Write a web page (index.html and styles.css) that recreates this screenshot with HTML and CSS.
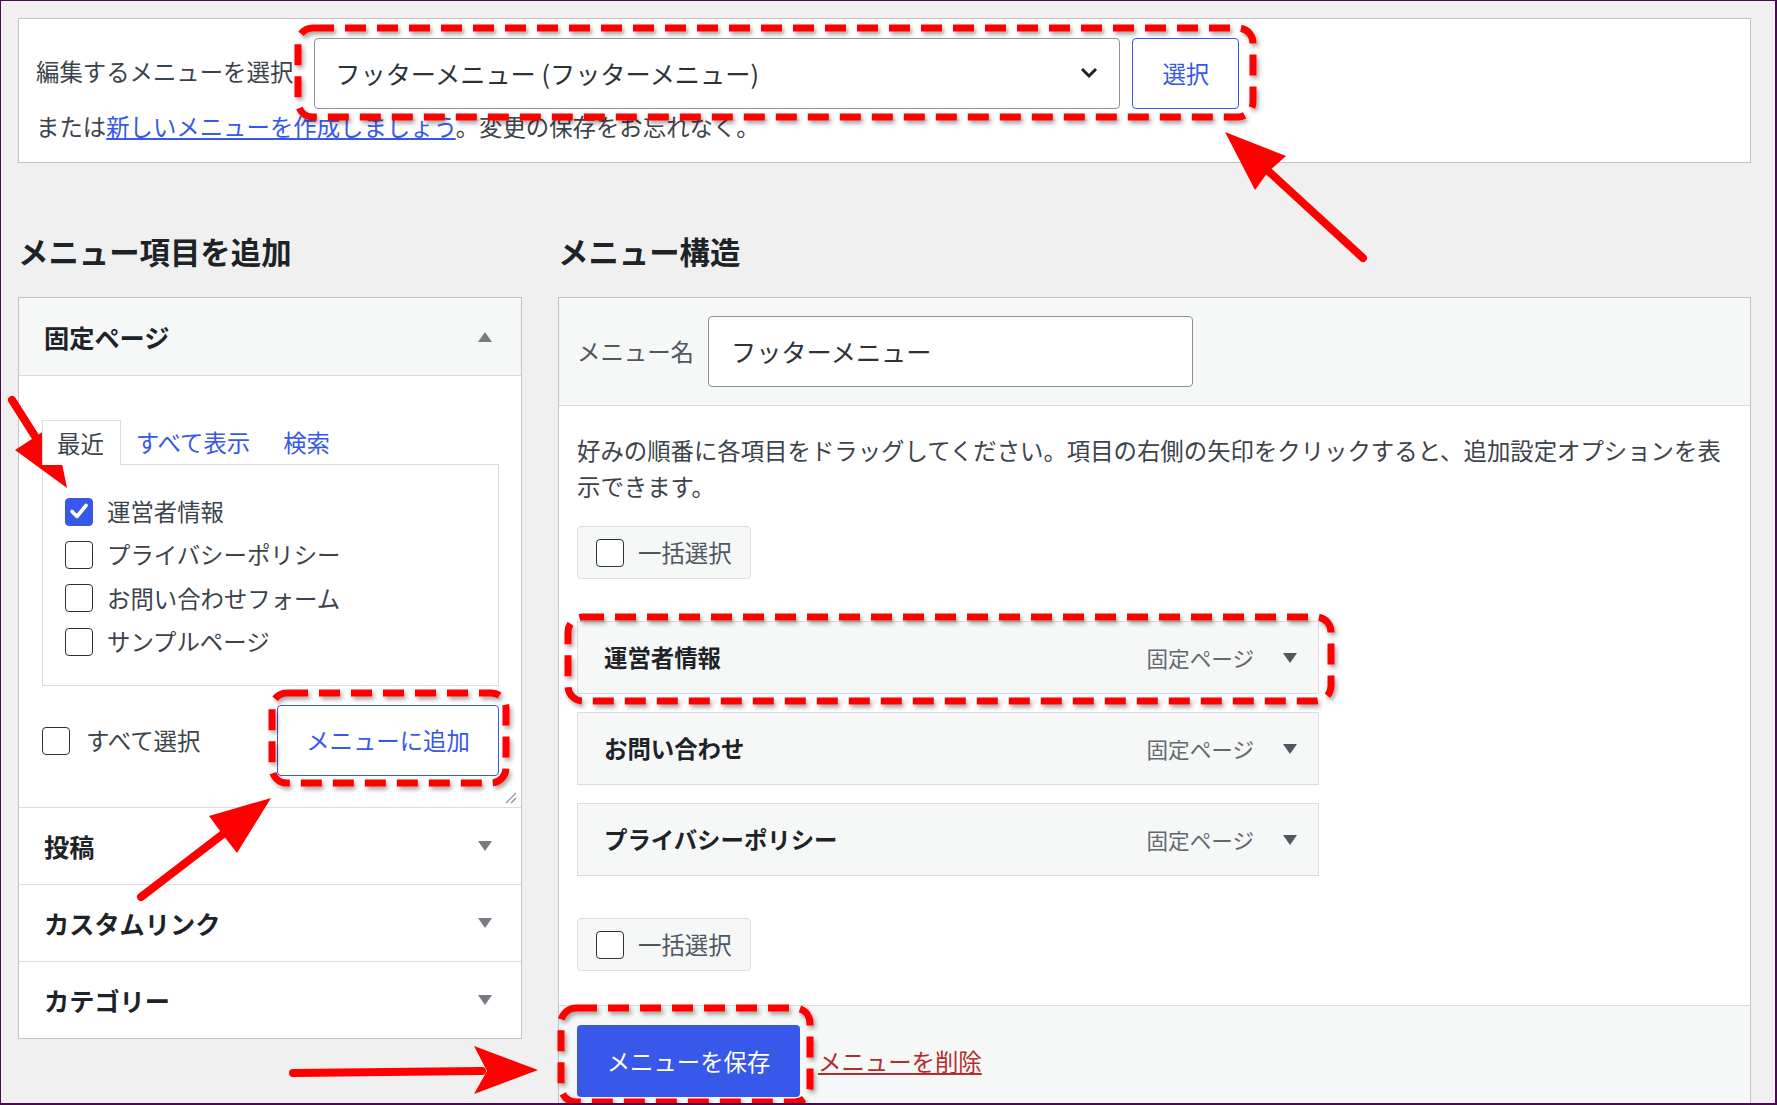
FILE: index.html
```html
<!DOCTYPE html>
<html lang="ja">
<head>
<meta charset="utf-8">
<title>メニュー</title>
<link rel="stylesheet" href="styles.css">
</head>
<body>
<div class="frame">
  <div class="page">
    <div class="manage-menus">
      <div class="select-row">
        <span class="select-label">編集するメニューを選択</span>
        <div class="select-box">
          <span>フッターメニュー (フッターメニュー)</span>
          <svg class="chevron" width="18" height="12" viewBox="0 0 18 12"><polyline points="2,2 9,9 16,2" fill="none" stroke="#1d2327" stroke-width="3"/></svg>
        </div>
        <button class="btn-outline select-btn">選択</button>
      </div>
      <p class="create-line">または<a class="link" href="#">新しいメニューを作成しましょう</a>。変更の保存をお忘れなく。</p>
    </div>

    <div class="columns">
      <div class="col-left">
        <h2 class="col-title">メニュー項目を追加</h2>
        <div class="accordion">
          <div class="acc-section open">
            <div class="acc-title">
              <h3>固定ページ</h3>
              <svg class="tri" width="16" height="12" viewBox="0 0 16 12"><polygon points="8,1 15,11 1,11" fill="#787c82"/></svg>
            </div>
            <div class="acc-content">
              <ul class="tabs">
                <li class="tab active">最近</li>
                <li class="tab"><a class="link plain" href="#">すべて表示</a></li>
                <li class="tab"><a class="link plain" href="#">検索</a></li>
              </ul>
              <div class="tab-panel">
                <div class="check-row"><span class="cb checked"><svg width="28" height="28" viewBox="0 0 28 28"><polyline points="7,14.5 12,19.5 21,8.5" fill="none" stroke="#fff" stroke-width="3.6" stroke-linecap="round" stroke-linejoin="round"/></svg></span>運営者情報</div>
                <div class="check-row"><span class="cb"></span>プライバシーポリシー</div>
                <div class="check-row"><span class="cb"></span>お問い合わせフォーム</div>
                <div class="check-row"><span class="cb"></span>サンプルページ</div>
              </div>
              <div class="add-row">
                <div class="check-row select-all"><span class="cb"></span>すべて選択</div>
                <button class="btn-outline add-btn">メニューに追加</button>
              </div>
              <svg class="resize-handle" width="12" height="12" viewBox="0 0 12 12"><line x1="1" y1="11" x2="11" y2="1" stroke="#8c8f94" stroke-width="1.2"/><line x1="6" y1="11" x2="11" y2="6" stroke="#8c8f94" stroke-width="1.2"/></svg>
            </div>
          </div>
          <div class="acc-section">
            <div class="acc-title">
              <h3>投稿</h3>
              <svg class="tri" width="16" height="12" viewBox="0 0 16 12"><polygon points="1,1 15,1 8,11" fill="#787c82"/></svg>
            </div>
          </div>
          <div class="acc-section">
            <div class="acc-title">
              <h3>カスタムリンク</h3>
              <svg class="tri" width="16" height="12" viewBox="0 0 16 12"><polygon points="1,1 15,1 8,11" fill="#787c82"/></svg>
            </div>
          </div>
          <div class="acc-section last">
            <div class="acc-title">
              <h3>カテゴリー</h3>
              <svg class="tri" width="16" height="12" viewBox="0 0 16 12"><polygon points="1,1 15,1 8,11" fill="#787c82"/></svg>
            </div>
          </div>
        </div>
      </div>

      <div class="col-right">
        <h2 class="col-title">メニュー構造</h2>
        <div class="menu-box">
          <div class="menu-header">
            <span class="name-label">メニュー名</span>
            <div class="name-input">フッターメニュー</div>
          </div>
          <div class="menu-body">
            <p class="instructions">好みの順番に各項目をドラッグしてください。項目の右側の矢印をクリックすると、追加設定オプションを表示できます。</p>
            <div class="bulk"><span class="cb"></span>一括選択</div>
            <ul class="menu-items">
              <li class="menu-item"><span class="item-title">運営者情報</span><span class="item-type">固定ページ</span><svg width="16" height="12" viewBox="0 0 16 12"><polygon points="1,1 15,1 8,11" fill="#50575e"/></svg></li>
              <li class="menu-item"><span class="item-title">お問い合わせ</span><span class="item-type">固定ページ</span><svg width="16" height="12" viewBox="0 0 16 12"><polygon points="1,1 15,1 8,11" fill="#50575e"/></svg></li>
              <li class="menu-item"><span class="item-title">プライバシーポリシー</span><span class="item-type">固定ページ</span><svg width="16" height="12" viewBox="0 0 16 12"><polygon points="1,1 15,1 8,11" fill="#50575e"/></svg></li>
            </ul>
            <div class="bulk"><span class="cb"></span>一括選択</div>
          </div>
          <div class="menu-footer">
            <button class="btn-primary">メニューを保存</button>
            <a class="delete-link" href="#">メニューを削除</a>
          </div>
        </div>
      </div>
    </div>
  </div>

  <svg class="annotations" width="1777" height="1105" viewBox="0 0 1777 1105">
    <defs>
      <filter id="sh" x="-5%" y="-20%" width="110%" height="140%">
        <feDropShadow dx="2" dy="3" stdDeviation="2" flood-color="#000" flood-opacity="0.35"/>
      </filter>
    </defs>
    <g fill="none" stroke="#ff0000" stroke-width="7" stroke-dasharray="21 11" filter="url(#sh)">
      <rect x="298" y="28" width="955" height="89" rx="15"/>
      <rect x="272" y="693" width="234" height="90" rx="15"/>
      <rect x="568" y="617" width="763" height="84" rx="15"/>
      <rect x="561" y="1008" width="249" height="94" rx="15"/>
    </g>
    <g stroke="#ff0000" stroke-width="8" stroke-linecap="round" fill="#ff0000">
      <line x1="1363" y1="258" x2="1265" y2="168"/>
      <polygon stroke="none" points="1225,132 1286,156 1268,172 1255,190"/>
      <line x1="12" y1="400" x2="38" y2="441"/>
      <polygon stroke="none" points="67,488 15,450 35,437 54,424"/>
      <line x1="141" y1="897" x2="227" y2="831"/>
      <polygon stroke="none" points="271,798 237,853 223,835 209,816"/>
      <line x1="293" y1="1073" x2="482" y2="1071"/>
      <polygon stroke="none" points="538,1070 474,1046 487,1071 474,1094"/>
    </g>
  </svg>
</div>
</body>
</html>
```
FILE: styles.css
```css
* { box-sizing: border-box; }

html, body {
  margin: 0;
  padding: 0;
  background: #f0f0f1;
}

body {
  font-family: "Noto Sans CJK JP", "Noto Sans", "Liberation Sans", sans-serif;
  font-size: 23.4px;
  color: #3c434a;
}

.frame {
  position: relative;
  width: 1777px;
  height: 1105px;
  border: 1px solid #4b0b4f;
  border-right-width: 2px;
  border-bottom-width: 2px;
  background: #f0f0f1;
  overflow: hidden;
}

.page {
  padding: 17px 24px 0 17px;
}

/* top card */
.manage-menus {
  background: #fff;
  border: 1px solid #c3c4c7;
  padding: 19px 17px 19px 17px;
}

.select-row {
  display: flex;
  align-items: center;
  height: 71px;
}

.select-label {
  line-height: 33px;
  margin-right: 21px;
  position: relative;
  top: -2px;
}

.select-box {
  width: 806px;
  height: 71px;
  border: 1px solid #8c8f94;
  border-radius: 4px;
  background: #fff;
  display: flex;
  align-items: center;
  justify-content: space-between;
  padding: 0 21px 2px 20px;
  font-size: 25.2px;
  color: #2c3338;
}

.btn-outline {
  font-family: inherit;
  font-size: 23.4px;
  color: #3858e9;
  background: #fff;
  border: 1px solid #3858e9;
  border-radius: 4px;
  padding: 0 0 2px 0;
  height: 71px;
}

.select-btn {
  width: 107px;
  margin-left: 12px;
}

.create-line {
  margin: 1px 0 0 0;
  line-height: 33px;
}

.link {
  color: #3858e9;
  text-decoration: underline;
}

.link.plain {
  text-decoration: none;
}

/* columns */
.columns {
  display: grid;
  grid-template-columns: 504px 1193px;
  column-gap: 36px;
  margin-top: 68px;
}

.col-title {
  margin: 0 0 26px 0;
  font-size: 30.4px;
  line-height: 40px;
  font-weight: 700;
  color: #1d2327;
}

/* accordion */
.accordion {
  background: #fff;
  border: 1px solid #c3c4c7;
}

.acc-section {
  border-bottom: 1px solid #dcdcde;
}

.acc-section.last {
  border-bottom: none;
}

.acc-title {
  height: 76px;
  display: flex;
  align-items: center;
  justify-content: space-between;
  padding: 0 28px 0 25px;
}

.acc-section.open .acc-title {
  height: 78px;
  background: #f6f7f7;
  border-bottom: 1px solid #dcdcde;
}

.acc-title h3 {
  margin: 0;
  font-size: 25.2px;
  line-height: 34px;
  font-weight: 700;
  color: #1d2327;
}

.acc-content {
  position: relative;
  padding: 44px 22px 31px 23px;
}

.tabs {
  list-style: none;
  margin: 0 0 -1px 0;
  padding: 0;
  display: flex;
  height: 45px;
}

.tab {
  height: 45px;
  line-height: 45px;
  padding: 0 18px 0 15px;
}

.tab.active {
  position: relative;
  z-index: 1;
  background: #fff;
  border: 1px solid #dcdcde;
  border-bottom: none;
  padding: 0 16px 0 14px;
  color: #3c434a;
}

.tab-panel {
  border: 1px solid #dcdcde;
  padding: 25px 20px 22px 22px;
}

.check-row {
  display: flex;
  align-items: center;
  gap: 14px;
  height: 43.3px;
  line-height: 33px;
}

.cb {
  flex: none;
  width: 28px;
  height: 28px;
  border: 1.5px solid #2c3338;
  border-radius: 4px;
  background: #fff;
  display: block;
}

.cb.checked {
  background: #3858e9;
  border-color: #3858e9;
  position: relative;
}

.cb.checked svg {
  position: absolute;
  left: -1.5px;
  top: -1.5px;
}

.add-row {
  margin-top: 19px;
  display: flex;
  align-items: center;
  justify-content: space-between;
  height: 71px;
}

.select-all {
  gap: 16px;
}

.add-btn {
  width: 222px;
}

.resize-handle {
  position: absolute;
  right: 4px;
  bottom: 3px;
}

/* right box */
.menu-box {
  background: #fff;
  border: 1px solid #c3c4c7;
  border-bottom: none;
}

.menu-header {
  background: #f6f7f7;
  border-bottom: 1px solid #dcdcde;
  padding: 18px;
  display: flex;
  align-items: center;
  gap: 14px;
}

.name-label {
  line-height: 33px;
  color: #50575e;
}

.name-input {
  width: 485px;
  height: 71px;
  border: 1px solid #8c8f94;
  border-radius: 4px;
  background: #fff;
  display: flex;
  align-items: center;
  padding-left: 22px;
  padding-bottom: 2px;
  font-size: 25.2px;
  color: #2c3338;
}

.menu-body {
  padding: 26px 18px 34px 18px;
}

.instructions {
  margin: 0;
  line-height: 36px;
  color: #3c434a;
}

.bulk {
  display: inline-flex;
  align-items: center;
  gap: 14px;
  height: 53px;
  padding: 0 18px;
  background: #f6f7f7;
  border: 1px solid #dcdcde;
  border-radius: 4px;
  margin-top: 22px;
  line-height: 33px;
  color: #50575e;
}

.menu-items {
  list-style: none;
  margin: 42px 0 42px 0;
  padding: 0;
  display: flex;
  flex-direction: column;
  gap: 18px;
}

.menu-items + .bulk {
  margin-top: 0;
}

.menu-item {
  width: 742px;
  height: 73px;
  border: 1px solid #dcdcde;
  background: #f6f7f7;
  display: flex;
  align-items: center;
  padding: 0 20px 0 26px;
}

.item-title {
  flex: 1;
  font-weight: 700;
  color: #1d2327;
  line-height: 33px;
}

.item-type {
  font-size: 21.6px;
  color: #646970;
  margin-right: 28px;
}

.menu-footer {
  background: #f6f7f7;
  border-top: 1px solid #dcdcde;
  padding: 19px 18px;
  display: flex;
  align-items: center;
  gap: 18px;
}

.btn-primary {
  font-family: inherit;
  font-size: 23.4px;
  color: #fff;
  background: #3858e9;
  border: none;
  border-radius: 4px;
  width: 223px;
  height: 72px;
  padding: 0;
}

.delete-link {
  color: #b32d2e;
  text-decoration: underline;
}

/* annotation overlay */
.annotations {
  position: absolute;
  top: -1px;
  left: -1px;
  pointer-events: none;
}
```
